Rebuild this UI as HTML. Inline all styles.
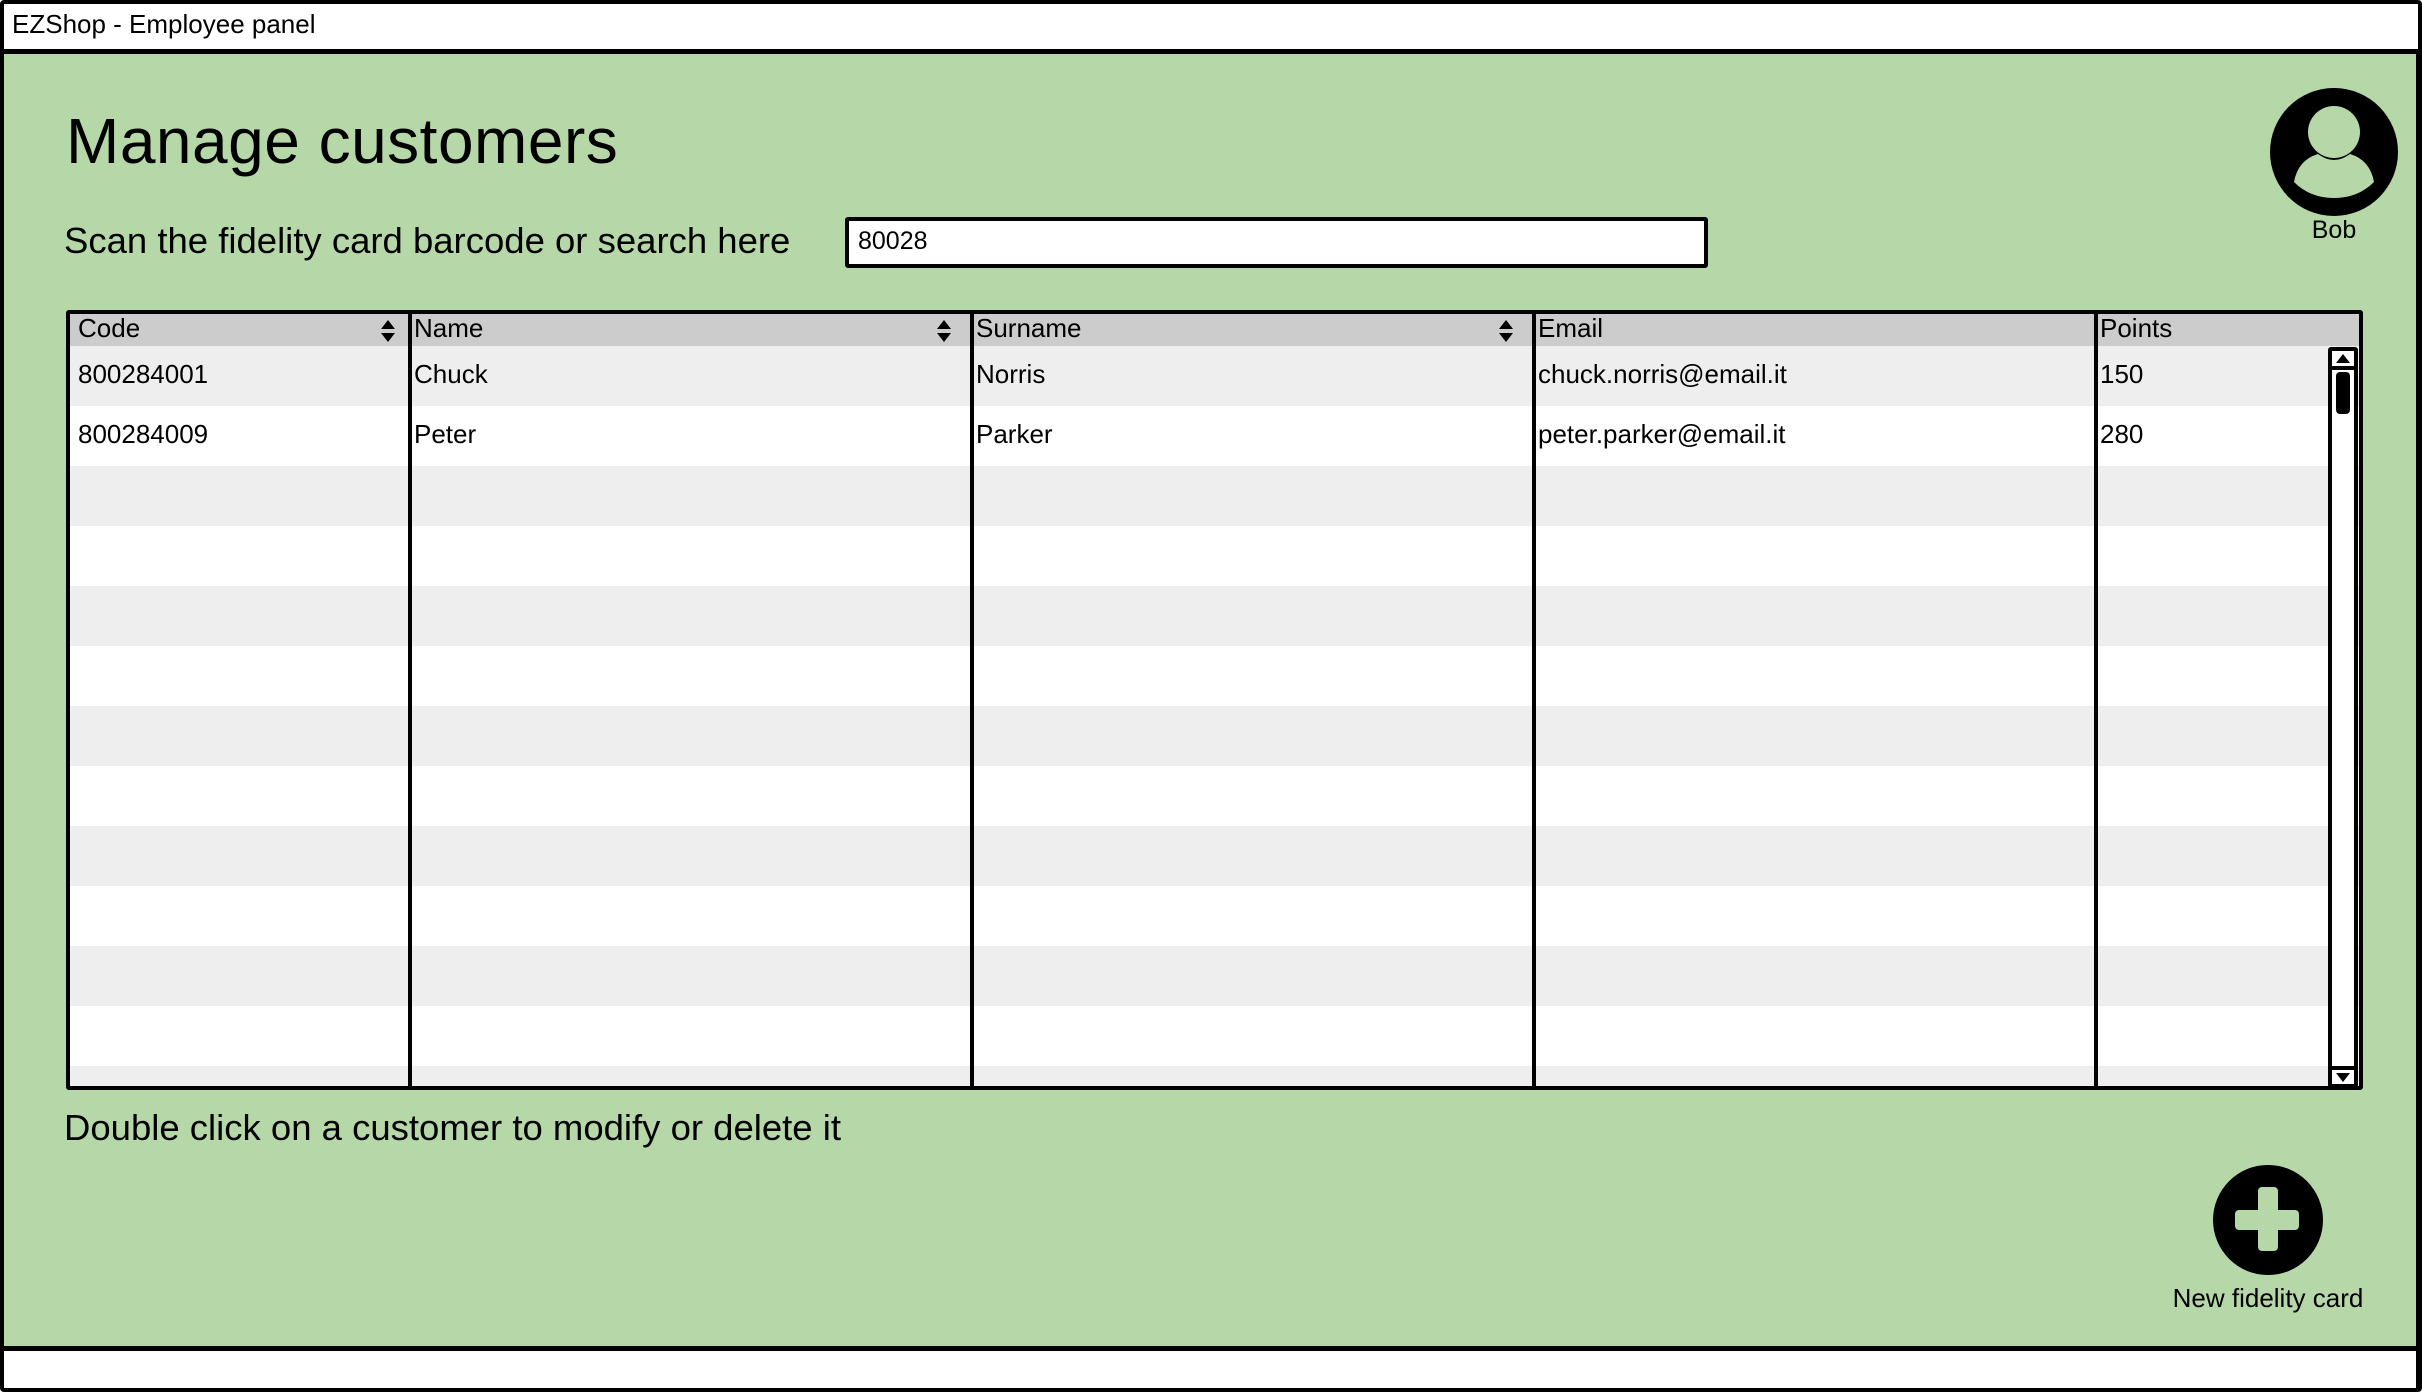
<!DOCTYPE html>
<html><head><meta charset="utf-8"><style>
*{margin:0;padding:0;box-sizing:border-box}
body{width:2422px;height:1392px;background:#fff;position:relative;overflow:hidden;font-family:"Liberation Sans",sans-serif;color:#000}
.a{position:absolute}
.t{white-space:nowrap}
</style></head><body>
<div class="a" style="left:0;top:0;width:2422px;height:1392px;border:4px solid #000;border-radius:4px"></div>
<div class="a t" style="left:12px;top:9px;font-size:26px;line-height:30px">EZShop - Employee panel</div>
<div class="a" style="left:3px;top:49px;width:2416px;height:5px;background:#000"></div>
<div class="a" style="left:4px;top:54px;width:2413px;height:1293px;background:#b6d7a8"></div>
<div class="a" style="left:3px;top:1346px;width:2416px;height:5px;background:#000"></div>
<div class="a" style="left:2416px;top:50px;width:5px;height:1340px;background:#000"></div>

<div class="a t" style="left:66px;top:103px;font-size:64px;line-height:76px;letter-spacing:0.5px">Manage customers</div>
<div class="a t" style="left:64px;top:219px;font-size:36.5px;line-height:44px">Scan the fidelity card barcode or search here</div>
<div class="a" style="left:845px;top:217px;width:863px;height:51px;background:#fff;border:4px solid #000;border-radius:3px"></div>
<div class="a t" style="left:858px;top:226px;font-size:25px;line-height:30px">80028</div>

<svg class="a" style="left:2268px;top:86px" width="132" height="132" viewBox="0 0 132 132">
<circle cx="66" cy="66" r="64" fill="#000"/>
<circle cx="66" cy="46" r="26" fill="#b6d7a8"/>
<path d="M26 96 Q30 74 50 68 Q66 80 82 68 Q102 74 106 96 Q90 112 66 112 Q42 112 26 96Z" fill="#b6d7a8"/>
</svg>
<div class="a t" style="left:2300px;top:215px;width:68px;text-align:center;font-size:25px;line-height:30px">Bob</div>

<div class="a" style="left:66px;top:310px;width:2297px;height:780px;background:#fff;border:4px solid #000;border-radius:3px;overflow:hidden">
 <div class="a" style="left:0;top:0;width:2300px;height:32px;background:#ccc"></div>
 <div class="a" style="left:0;top:32px;width:2300px;height:60px;background:#eee"></div>
 <div class="a" style="left:0;top:152px;width:2300px;height:60px;background:#eee"></div>
 <div class="a" style="left:0;top:272px;width:2300px;height:60px;background:#eee"></div>
 <div class="a" style="left:0;top:392px;width:2300px;height:60px;background:#eee"></div>
 <div class="a" style="left:0;top:512px;width:2300px;height:60px;background:#eee"></div>
 <div class="a" style="left:0;top:632px;width:2300px;height:60px;background:#eee"></div>
 <div class="a" style="left:0;top:752px;width:2300px;height:60px;background:#eee"></div>
</div>
<div class="a" style="left:408px;top:310px;width:4px;height:780px;background:#000"></div>
<div class="a" style="left:970px;top:310px;width:4px;height:780px;background:#000"></div>
<div class="a" style="left:1532px;top:310px;width:4px;height:780px;background:#000"></div>
<div class="a" style="left:2094px;top:310px;width:4px;height:780px;background:#000"></div>

<div style="font-size:26px;line-height:30px">
<div class="a t" style="left:78px;top:313px">Code</div>
<div class="a t" style="left:414px;top:313px">Name</div>
<div class="a t" style="left:976px;top:313px">Surname</div>
<div class="a t" style="left:1538px;top:313px">Email</div>
<div class="a t" style="left:2100px;top:313px">Points</div>
<div class="a t" style="left:78px;top:359px">800284001</div>
<div class="a t" style="left:414px;top:359px">Chuck</div>
<div class="a t" style="left:976px;top:359px">Norris</div>
<div class="a t" style="left:1538px;top:359px">chuck.norris@email.it</div>
<div class="a t" style="left:2100px;top:359px">150</div>
<div class="a t" style="left:78px;top:419px">800284009</div>
<div class="a t" style="left:414px;top:419px">Peter</div>
<div class="a t" style="left:976px;top:419px">Parker</div>
<div class="a t" style="left:1538px;top:419px">peter.parker@email.it</div>
<div class="a t" style="left:2100px;top:419px">280</div>
</div>
<svg class="a" style="left:380px;top:318px" width="16" height="26"><path d="M1 11 L8 2 L15 11Z M1 15 L8 24 L15 15Z" fill="#000"/></svg>
<svg class="a" style="left:936px;top:318px" width="16" height="26"><path d="M1 11 L8 2 L15 11Z M1 15 L8 24 L15 15Z" fill="#000"/></svg>
<svg class="a" style="left:1498px;top:318px" width="16" height="26"><path d="M1 11 L8 2 L15 11Z M1 15 L8 24 L15 15Z" fill="#000"/></svg>

<div class="a" style="left:2328px;top:347px;width:30px;height:741px;background:#fff;border:4px solid #000;border-radius:3px"></div>
<div class="a" style="left:2328px;top:366px;width:30px;height:4px;background:#000"></div>
<div class="a" style="left:2328px;top:1066px;width:30px;height:4px;background:#000"></div>
<svg class="a" style="left:2335px;top:351px" width="16" height="14"><path d="M1 12 L8 3 L15 12Z" fill="#000"/></svg>
<svg class="a" style="left:2335px;top:1071px" width="16" height="14"><path d="M1 2 L8 11 L15 2Z" fill="#000"/></svg>
<div class="a" style="left:2336px;top:372px;width:14px;height:42px;background:#000;border-radius:4px"></div>

<div class="a t" style="left:64px;top:1106px;font-size:36.5px;line-height:44px">Double click on a customer to modify or delete it</div>

<svg class="a" style="left:2213px;top:1165px" width="110" height="110" viewBox="0 0 110 110">
<circle cx="55" cy="55" r="55" fill="#000"/>
<rect x="45" y="22" width="20" height="64" rx="4" fill="#b6d7a8"/>
<rect x="22" y="45" width="64" height="20" rx="4" fill="#b6d7a8"/>
</svg>
<div class="a t" style="left:2158px;top:1283px;width:220px;text-align:center;font-size:26px;line-height:30px">New fidelity card</div>
</body></html>
